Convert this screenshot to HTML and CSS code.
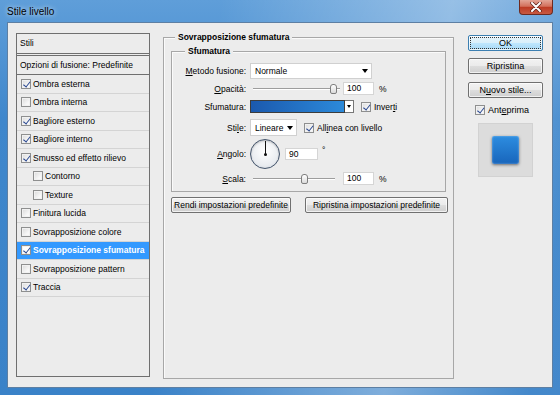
FILE: index.html
```html
<!DOCTYPE html>
<html lang="it">
<head>
    <meta charset="UTF-8">
    <meta name="viewport" content="width=device-width, initial-scale=1.0">
    <title>Stile livello</title>
    <link rel="stylesheet" href="styles.css">
</head>
<body>
    <div class="window">
        <div class="titlebar">
            <span class="title">Stile livello</span>
            <button class="close-button">
                <svg width="12" height="10" viewBox="0 0 12 10">
                    <path d="M2 1 L10 9 M10 1 L2 9" stroke="#5a2019" stroke-width="3.4" stroke-linecap="round"/>
                    <path d="M2 1 L10 9 M10 1 L2 9" stroke="#fff" stroke-width="2" stroke-linecap="round"/>
                </svg>
            </button>
        </div>

        <div class="client">
            <!-- Effects list on the left -->
            <div class="styles-list">
                <div class="list-head">Stili</div>
                <div class="list-blend">Opzioni di fusione: Predefinite</div>
                <div class="list-row"><span class="cb on"></span>Ombra esterna</div>
                <div class="list-row"><span class="cb"></span>Ombra interna</div>
                <div class="list-row"><span class="cb on"></span>Bagliore esterno</div>
                <div class="list-row"><span class="cb on"></span>Bagliore interno</div>
                <div class="list-row"><span class="cb on"></span>Smusso ed effetto rilievo</div>
                <div class="list-row sub"><span class="cb"></span>Contorno</div>
                <div class="list-row sub"><span class="cb"></span>Texture</div>
                <div class="list-row"><span class="cb"></span>Finitura lucida</div>
                <div class="list-row"><span class="cb"></span>Sovrapposizione colore</div>
                <div class="list-row selected"><span class="cb on"></span>Sovrapposizione sfumatura</div>
                <div class="list-row"><span class="cb"></span>Sovrapposizione pattern</div>
                <div class="list-row"><span class="cb on"></span>Traccia</div>
            </div>

            <!-- Gradient overlay settings -->
            <div class="group overlay-group">
                <div class="group-title">Sovrapposizione sfumatura</div>

                <div class="group gradient-group">
                    <div class="group-title">Sfumatura</div>

                    <div class="field-row row-blend">
                        <span class="field-label"><u>M</u>etodo fusione:</span>
                        <div class="select select-blend">Normale<span class="arrow"></span></div>
                    </div>

                    <div class="field-row row-opacity">
                        <span class="field-label"><u>O</u>pacità:</span>
                        <div class="slider">
                            <div class="slider-track"></div>
                            <div class="slider-thumb" style="left: 80px;"></div>
                        </div>
                        <div class="num">100</div>
                        <span class="unit">%</span>
                    </div>

                    <div class="field-row row-gradient">
                        <span class="field-label">Sfumatura:</span>
                        <div class="gradient-pick">
                            <div class="gradient-bar"></div>
                            <div class="gradient-drop"><span class="arrow small"></span></div>
                        </div>
                        <span class="cb on"></span><span>Inver<u>t</u>i</span>
                    </div>

                    <div class="field-row row-style">
                        <span class="field-label">Sti<u>l</u>e:</span>
                        <div class="select select-style">Lineare<span class="arrow"></span></div>
                        <span class="cb on"></span><span>All<u>i</u>nea con livello</span>
                    </div>

                    <div class="field-row row-angle">
                        <span class="field-label"><u>A</u>ngolo:</span>
                        <div class="dial">
                            <div class="dial-hand"></div>
                            <div class="dial-dot"></div>
                        </div>
                        <div class="num num-angle">90</div>
                        <span class="degree">°</span>
                    </div>

                    <div class="field-row row-scale">
                        <span class="field-label"><u>S</u>cala:</span>
                        <div class="slider">
                            <div class="slider-track short"></div>
                            <div class="slider-thumb" style="left: 51px;"></div>
                        </div>
                        <div class="num">100</div>
                        <span class="unit">%</span>
                    </div>
                </div>

                <div class="group-buttons">
                    <button class="btn btn-defaults">Rendi impostazioni predefinite</button>
                    <button class="btn btn-restore">Ripristina impostazioni predefinite</button>
                </div>
            </div>

            <!-- Dialog buttons and preview -->
            <div class="side">
                <button class="btn btn-ok">OK</button>
                <button class="btn btn-reset">Ripristina</button>
                <button class="btn btn-new">N<u>u</u>ovo stile...</button>
                <div class="preview-check"><span class="cb on"></span>Ant<u>e</u>prima</div>
                <div class="preview-box">
                    <div class="preview-swatch"></div>
                </div>
            </div>
        </div>
    </div>
</body>
</html>
```

FILE: styles.css
```css
* {
    box-sizing: border-box;
}

body {
    margin: 0;
    font-family: "Liberation Sans", Arial, sans-serif;
    font-size: 8.5px;
    color: #000;
}

.window {
    width: 560px;
    height: 395px;
    display: flex;
    flex-direction: column;
    background:
        linear-gradient(100deg, rgba(255, 255, 255, 0) 35%, rgba(255, 255, 255, 0.35) 72%, rgba(255, 255, 255, 0.05) 95%),
        linear-gradient(#5f9ed9, #3f87cc 30%, #3a82c8);
}

.titlebar {
    height: 22px;
    display: flex;
    justify-content: space-between;
    align-items: flex-start;
    padding-left: 7px;
}

.title {
    font-size: 10px;
    line-height: 24px;
    text-shadow: 0 0 5px rgba(255, 255, 255, 0.9);
}

.close-button {
    width: 34px;
    height: 15px;
    margin-right: 7px;
    padding: 0;
    border: 1px solid #6e2a20;
    border-top: none;
    border-radius: 0 0 4px 4px;
    background: linear-gradient(#e3a596, #d3705c 45%, #bd3b24 52%, #c85a42);
    display: flex;
    align-items: center;
    justify-content: center;
}

.client {
    height: 366px;
    margin: 0 7px;
    padding: 10px 0 0 8px;
    border: 1px solid #5d7fa3;
    background: #ececec;
    display: flex;
    align-items: flex-start;
}

/* list of effects */
.styles-list {
    flex: none;
    width: 134px;
    height: 344px;
    border: 1px solid #6f6f6f;
}

.list-head {
    height: 22px;
    line-height: 19px;
    padding-left: 3px;
    border-bottom: 3px double #6f6f6f;
}

.list-blend {
    height: 19px;
    line-height: 18px;
    padding-left: 3px;
    border-bottom: 1px solid #6f6f6f;
}

.list-row {
    height: 18.5px;
    display: flex;
    align-items: center;
    padding-left: 4px;
    border-bottom: 1px solid #d4d4d4;
}

.list-row.sub {
    padding-left: 16px;
}

.list-row.selected {
    background: #3399ff;
    color: #fff;
    font-weight: bold;
}

/* checkbox */
.cb {
    flex: none;
    position: relative;
    width: 10px;
    height: 10px;
    margin-right: 2px;
    border: 1px solid #8e8f8f;
    background: linear-gradient(135deg, #d9d9d9, #f8f8f8 70%);
    box-shadow: inset 0 0 0 1px #f1f1f1;
}

.list-row.selected .cb {
    background: #fff;
}

.cb.on::after {
    content: "";
    position: absolute;
    left: 2.5px;
    top: 0;
    width: 2.5px;
    height: 5.5px;
    border-right: 1.6px solid #2c4a92;
    border-bottom: 1.6px solid #2c4a92;
    transform: rotate(38deg);
}

/* group boxes */
.group {
    position: relative;
    border: 1px solid #a7a7a7;
    box-shadow: inset 1px 1px 0 #fafafa;
}

.group-title {
    position: absolute;
    top: -7px;
    left: 11px;
    padding: 0 3px;
    line-height: 12px;
    font-weight: bold;
    background: #ececec;
}

.overlay-group {
    flex: none;
    width: 291px;
    height: 342px;
    margin: 4px 0 0 13px;
    padding: 13px 0 0 7px;
}

.gradient-group {
    width: 275px;
    height: 141px;
    padding-top: 11px;
}

.gradient-group .group-title {
    left: 13px;
}

.field-row {
    display: flex;
    align-items: center;
}

.field-label {
    flex: none;
    width: 74px;
    margin-right: 4px;
    text-align: right;
}

.row-blend { height: 16px; }
.row-opacity { height: 13px; margin-top: 3px; }
.row-gradient { height: 13px; margin-top: 5px; }
.row-style { height: 17px; margin-top: 6px; }
.row-angle { height: 30px; margin-top: 3px; }
.row-scale { height: 13px; margin-top: 3px; }

.select {
    height: 100%;
    display: flex;
    align-items: center;
    padding-left: 4px;
    background: #fff;
    border: 1px solid #d0d0d0;
}

.select-blend {
    width: 122px;
}

.select-style {
    width: 47px;
    margin-right: 7px;
}

.arrow {
    margin-left: auto;
    margin-right: 3px;
    border-left: 3px solid transparent;
    border-right: 3px solid transparent;
    border-top: 4px solid #000;
}

.arrow.small {
    margin: 0;
    border-left-width: 2px;
    border-right-width: 2px;
    border-top-width: 3px;
}

.slider {
    position: relative;
    width: 93px;
    height: 13px;
    display: flex;
    align-items: center;
}

.slider-track {
    width: 87px;
    height: 2px;
    margin-left: 3px;
    border-top: 1px solid #9d9d9d;
    border-bottom: 1px solid #fff;
}

.slider-track.short {
    width: 82px;
}

.slider-thumb {
    position: absolute;
    top: 2px;
    width: 7px;
    height: 10px;
    border: 1px solid #7e7e7e;
    border-radius: 3px 3px 2px 2px;
    background: linear-gradient(#ffffff, #dadada);
}

.num {
    width: 31px;
    height: 13px;
    line-height: 11px;
    padding-left: 3px;
    background: #fff;
    border: 1px solid #d5d5d5;
}

.unit {
    margin-left: 5px;
}

.gradient-pick {
    display: flex;
    height: 13px;
    margin-right: 7px;
}

.gradient-bar {
    width: 95px;
    border: 1px solid #3c3c3c;
    background: linear-gradient(to right, #1b59ae, #2c8ada);
}

.gradient-drop {
    width: 9px;
    display: flex;
    align-items: center;
    justify-content: center;
    background: #fff;
    border: 1px solid #777;
    border-left: none;
}

.row-gradient .cb,
.row-style .cb {
    margin-right: 3px;
}

.dial {
    position: relative;
    width: 30px;
    height: 30px;
    border-radius: 50%;
    border: 1px solid #44546b;
    background: radial-gradient(circle at 50% 40%, #ffffff, #e9ecf0 65%, #c8d0da);
    box-shadow: inset 0 1px 2px rgba(0, 0, 0, 0.25);
}

.dial-hand {
    position: absolute;
    left: 13.5px;
    top: 1px;
    width: 1px;
    height: 13px;
    background: #111;
}

.dial-dot {
    position: absolute;
    left: 12.5px;
    top: 12.5px;
    width: 3px;
    height: 3px;
    border-radius: 50%;
    background: #111;
}

.num-angle {
    width: 33px;
    height: 12px;
    margin-left: 5px;
    margin-top: -1px;
}

.degree {
    margin-left: 4px;
    margin-top: -8px;
}

.group-buttons {
    display: flex;
    margin-top: 5px;
}

/* buttons */
.btn {
    height: 16px;
    padding: 0;
    font-family: inherit;
    font-size: 8.5px;
    color: #000;
    border: 1px solid #707070;
    border-radius: 2px;
    background: linear-gradient(#f2f2f2, #ebebeb 48%, #dddddd 52%, #cfcfcf);
    box-shadow: inset 0 0 0 1px rgba(255, 255, 255, 0.7);
}

.btn-defaults {
    width: 120px;
}

.btn-restore {
    width: 143px;
    margin-left: 14px;
}

.side {
    flex: none;
    width: 75px;
    margin: 2px 0 0 14px;
    display: flex;
    flex-direction: column;
}

.side .btn {
    width: 75px;
    font-size: 9px;
}

.btn-ok {
    border-color: #3c7fb1;
    background: linear-gradient(#e8f5fc, #d9effa 48%, #bee6fd 52%, #a7d9f5);
    outline: 1px dotted #333;
    outline-offset: -3px;
}

.btn-reset {
    margin-top: 7px;
}

.btn-new {
    margin-top: 8px;
}

.preview-check {
    display: flex;
    align-items: center;
    height: 11px;
    margin-top: 6px;
    padding-left: 7px;
    font-size: 9px;
}

.preview-check .cb {
    margin-right: 3px;
}

.preview-box {
    width: 55px;
    height: 54px;
    margin: 8px 0 0 10px;
    display: flex;
    align-items: center;
    justify-content: center;
    background: #dcdcdc;
    border: 1px solid #d2d2d2;
}

.preview-swatch {
    width: 27px;
    height: 28px;
    border-radius: 2px;
    background: linear-gradient(#2d8de0, #1865bb);
    box-shadow: 0 1px 3px rgba(0, 0, 0, 0.5), inset 0 0 2px rgba(255, 255, 255, 0.5);
}
```
